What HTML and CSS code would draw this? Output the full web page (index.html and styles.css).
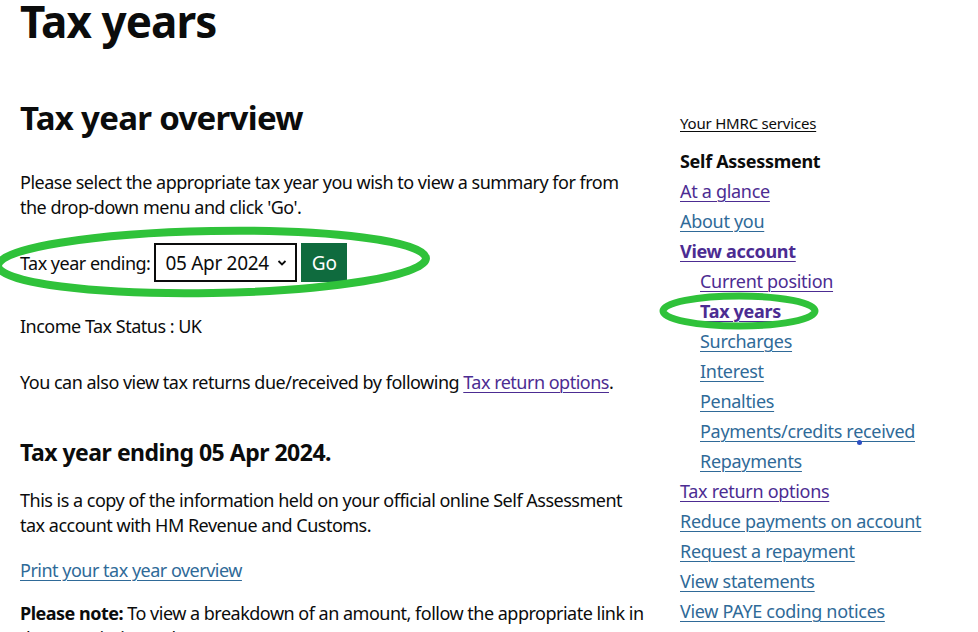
FILE: index.html
```html
<!DOCTYPE html>
<html lang="en">
<head>
<meta charset="utf-8">
<title>Tax years</title>
<link rel="stylesheet" href="styles.css">
</head>
<body>
<div class="page">
  <h1 class="title">Tax years</h1>
  <div class="layout">
    <main class="main">
      <h2 class="overview">Tax year overview</h2>
      <p class="body intro">Please select the appropriate tax year you wish to view a summary for from the drop-down menu and click 'Go'.</p>
      <form class="year-form">
        <label class="year-label">Tax year ending:</label>
        <div class="select">
          <span>05 Apr 2024</span>
          <svg class="chev" width="10" height="8" viewBox="0 0 10 8"><path d="M1.5 2 L5 5.5 L8.5 2" fill="none" stroke="#0b0c0c" stroke-width="1.8"/></svg>
        </div>
        <button type="button" class="go">Go</button>
      </form>
      <p class="body status">Income Tax Status : UK</p>
      <p class="body also">You can also view tax returns due/received by following <a class="link visited" href="#">Tax return options</a>.</p>
      <h3 class="ending">Tax year ending 05 Apr 2024.</h3>
      <p class="body copy">This is a copy of the information held on your official online Self Assessment tax account with HM Revenue and Customs.</p>
      <p class="body print"><a class="link" href="#">Print your tax year overview</a></p>
      <p class="body note"><strong>Please note:</strong> To view a breakdown of an amount, follow the appropriate link in the 'Description' column.</p>
    </main>
    <nav class="side">
      <a class="services" href="#">Your HMRC services</a>
      <div class="side-head">Self Assessment</div>
      <ul class="side-list">
        <li><a class="link visited" href="#">At a glance</a></li>
        <li><a class="link" href="#">About you</a></li>
        <li><a class="link visited strong" href="#">View account</a>
          <ul class="sub-list">
            <li><a class="link visited" href="#">Current position</a></li>
            <li><a class="link visited strong" href="#">Tax years</a></li>
            <li><a class="link" href="#">Surcharges</a></li>
            <li><a class="link" href="#">Interest</a></li>
            <li><a class="link" href="#">Penalties</a></li>
            <li><a class="link" href="#">Payments/credits received</a></li>
            <li><a class="link" href="#">Repayments</a></li>
          </ul>
        </li>
        <li><a class="link visited" href="#">Tax return options</a></li>
        <li><a class="link" href="#">Reduce payments on account</a></li>
        <li><a class="link" href="#">Request a repayment</a></li>
        <li><a class="link" href="#">View statements</a></li>
        <li><a class="link" href="#">View PAYE coding notices</a></li>
      </ul>
    </nav>
  </div>
  <svg class="ring ring-form" width="460" height="90" viewBox="0 0 460 90"><ellipse cx="232" cy="45" rx="214" ry="31" transform="rotate(-1 232 45)" fill="none" stroke="#2fc23a" stroke-width="8"/></svg>
  <svg class="ring ring-nav" width="180" height="50" viewBox="0 0 180 50"><ellipse cx="90" cy="25" rx="76" ry="15" fill="none" stroke="#2fc23a" stroke-width="7"/></svg>
  <span class="dot"></span>
</div>
</body>
</html>
```
FILE: styles.css
```css
* { box-sizing: border-box; }
html, body { margin: 0; padding: 0; background: #ffffff; }
body {
  font-family: "Noto Sans", "Liberation Sans", sans-serif;
  color: #0b0c0c;
  overflow: hidden;
  height: 632px;
}
.page {
  position: relative;
  display: flow-root;
  padding: 0 0 0 20px;
}
.title {
  margin: -5px 0 0 0;
  font-size: 44px;
  line-height: 52px;
  font-weight: 700;
  letter-spacing: -0.9px;
}
.layout {
  display: grid;
  grid-template-columns: 660px 1fr;
}
.overview {
  margin: 51px 0 0 0;
  font-size: 33px;
  line-height: 40px;
  font-weight: 700;
  letter-spacing: -0.7px;
}
.body {
  margin: 0;
  font-size: 18px;
  line-height: 25px;
  letter-spacing: -0.5px;
  max-width: 626px;
}
.intro { margin-top: 32px; }
.year-form {
  display: flex;
  align-items: center;
  margin-top: 23px;
  height: 39px;
}
.year-label {
  font-size: 18px;
  letter-spacing: -0.5px;
  margin-right: 4px;
}
.select {
  display: flex;
  align-items: center;
  justify-content: space-between;
  width: 143px;
  height: 39px;
  border: 2px solid #0b0c0c;
  padding: 0 8px 0 9px;
  font-size: 19px;
  letter-spacing: -0.3px;
}
.go {
  margin-left: 4px;
  width: 46px;
  height: 39px;
  border: 0;
  background: #0f6b3e;
  color: #ffffff;
  font-family: inherit;
  font-size: 19px;
  padding: 0;
}
.status { margin-top: 32px; }
.also { margin-top: 31px; }
.ending {
  margin: 42px 0 0 0;
  font-size: 23px;
  line-height: 30px;
  font-weight: 700;
  letter-spacing: -0.5px;
}
.copy { margin-top: 21px; }
.print { margin-top: 20px; }
.note { margin-top: 18px; }
.link { color: #2f6a98; text-decoration: underline; text-underline-offset: 3px; text-decoration-thickness: 1px; }
.link.visited { color: #4c2c92; }
.link.strong { font-weight: 700; }
.side {
  padding-top: 64px;
  display: flex;
  flex-direction: column;
  align-items: flex-start;
}
.services {
  color: #0b0c0c;
  font-size: 15px;
  line-height: 24px;
  letter-spacing: -0.2px;
  text-decoration: underline;
  text-underline-offset: 2px;
}
.side-head {
  margin-top: 11px;
  font-size: 18px;
  line-height: 30px;
  font-weight: 700;
  letter-spacing: -0.3px;
}
.side-list, .sub-list {
  list-style: none;
  margin: 0;
  padding: 0;
  font-size: 18px;
  line-height: 30px;
  letter-spacing: -0.3px;
}
.sub-list { padding-left: 20px; }
.ring { position: absolute; pointer-events: none; }
.ring-form { left: -20px; top: 217px; }
.ring-nav { left: 649px; top: 286px; }
.dot {
  position: absolute;
  left: 857px;
  top: 440px;
  width: 5px;
  height: 5px;
  border-radius: 50%;
  background: #2d4fc4;
}
```
